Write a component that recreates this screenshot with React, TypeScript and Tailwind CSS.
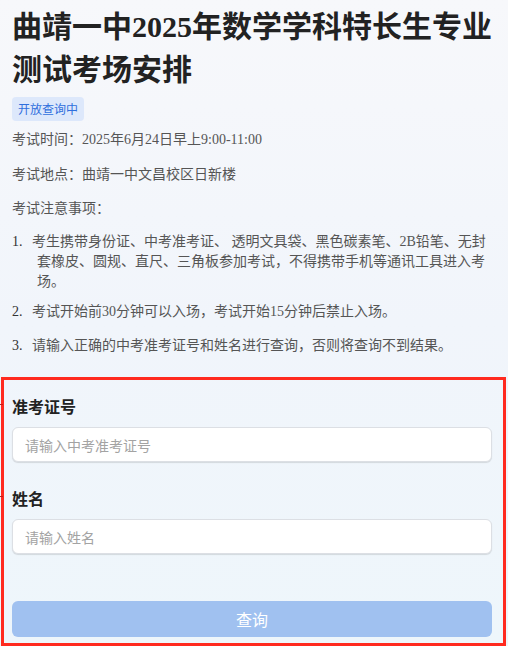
import { useState } from "react";

const rules = [
  "考生携带身份证、中考准考证、 透明文具袋、黑色碳素笔、2B铅笔、无封套橡皮、圆规、直尺、三角板参加考试，不得携带手机等通讯工具进入考场。",
  "考试开始前30分钟可以入场，考试开始15分钟后禁止入场。",
  "请输入正确的中考准考证号和姓名进行查询，否则将查询不到结果。",
];

const serif = "font-['Liberation_Serif','Noto_Sans_CJK_SC',serif]";
const sans = "font-['Noto_Sans_CJK_SC','Liberation_Sans',sans-serif]";

export default function App() {
  const [ticket, setTicket] = useState("");
  const [name, setName] = useState("");

  return (
    <div
      lang="zh-CN"
      className="w-[508px] h-[646px] overflow-hidden bg-linear-to-b from-[#f7f8fb] via-[#f1f5fb] to-[#eef6fb] pt-[5px] [text-spacing-trim:space-all]"
    >
      <div className="px-3">
        <h1 className={`${serif} text-[30px] leading-[43px] font-bold text-[#222]`}>
          曲靖一中2025年数学学科特长生专业测试考场安排
        </h1>

        <span className={`${sans} mt-[6px] inline-block h-6 rounded px-1.5 bg-[#dde8fb] text-[12px] leading-6 text-[#2f6fdd]`}>
          开放查询中
        </span>

        <div className={`${serif} text-[14px] text-[#555]`}>
          <p className="mt-[8px] leading-[21px]">考试时间：2025年6月24日早上9:00-11:00</p>
          <p className="mt-[14px] leading-[21px]">考试地点：曲靖一中文昌校区日新楼</p>
          <p className="mt-[13px] leading-[21px]">考试注意事项：</p>

          <ol className="mt-[13px] leading-5">
            {rules.map((r, i) => (
              <li key={i} className={`flex ${i === 0 ? "mb-[10px]" : "mb-[14px]"}`}>
                <span className="w-[25px] shrink-0 text-[#333]">{i + 1}.</span>
                <span className="flex-1 indent-[-5px]">{r}</span>
              </li>
            ))}
          </ol>
        </div>
      </div>

      <form
        className={`${sans} mt-[21px] ml-[1px] mr-[2px] border-[3px] border-[#ff2a1f] pl-2 pr-[11px] pt-[14px] pb-[6px]`}
        onSubmit={(e) => e.preventDefault()}
      >
        <label className="relative block text-[16px] leading-6 font-semibold text-[#222]">
          <span className="absolute left-[-12px] top-[10px] h-[1px] w-[3px] bg-[#c0201a]" />
          准考证号
        </label>
        <input
          value={ticket}
          onChange={(e) => setTicket(e.target.value)}
          placeholder="请输入中考准考证号"
          className="mt-[9px] block w-full h-[35px] rounded-md border border-[#dcdfe4] bg-white px-3 text-[14px] text-[#333] placeholder:text-[#a3a3a3] shadow-[0_1px_1px_rgba(0,0,0,0.12)] outline-none"
        />

        <label className="relative mt-6 block text-[16px] leading-6 font-semibold text-[#222]">
          <span className="absolute left-[-12px] top-[10px] h-[1px] w-[3px] bg-[#c0201a]" />
          姓名
        </label>
        <input
          value={name}
          onChange={(e) => setName(e.target.value)}
          placeholder="请输入姓名"
          className="mt-[9px] block w-full h-[35px] rounded-md border border-[#dcdfe4] bg-white px-3 text-[14px] text-[#333] placeholder:text-[#a3a3a3] shadow-[0_1px_1px_rgba(0,0,0,0.12)] outline-none"
        />

        <button
          type="submit"
          className="mt-[47px] block w-full h-9 rounded-md bg-[#a0c1f0] text-[16px] text-white"
        >
          查询
        </button>
      </form>
    </div>
  );
}
